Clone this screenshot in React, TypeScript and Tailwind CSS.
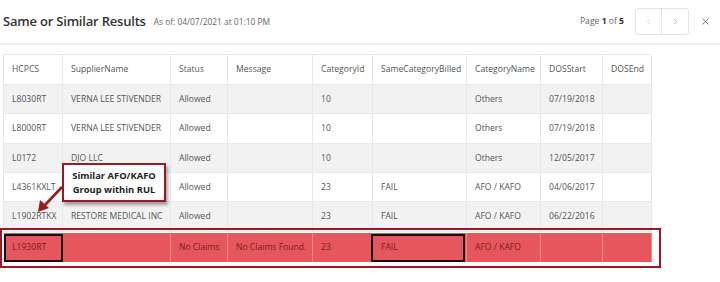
import { ChevronLeft, ChevronRight, X } from "lucide-react";

type Row = {
  hcpcs: string;
  supplier: string;
  status: string;
  message: string;
  categoryId: string;
  sameBilled: string;
  categoryName: string;
  dosStart: string;
  dosEnd: string;
};

const rows: Row[] = [
  { hcpcs: "L8030RT", supplier: "VERNA LEE STIVENDER", status: "Allowed", message: "", categoryId: "10", sameBilled: "", categoryName: "Others", dosStart: "07/19/2018", dosEnd: "" },
  { hcpcs: "L8000RT", supplier: "VERNA LEE STIVENDER", status: "Allowed", message: "", categoryId: "10", sameBilled: "", categoryName: "Others", dosStart: "07/19/2018", dosEnd: "" },
  { hcpcs: "L0172", supplier: "DJO LLC", status: "Allowed", message: "", categoryId: "10", sameBilled: "", categoryName: "Others", dosStart: "12/05/2017", dosEnd: "" },
  { hcpcs: "L4361KXLT", supplier: "", status: "Allowed", message: "", categoryId: "23", sameBilled: "FAIL", categoryName: "AFO / KAFO", dosStart: "04/06/2017", dosEnd: "" },
  { hcpcs: "L1902RTKX", supplier: "RESTORE MEDICAL INC", status: "Allowed", message: "", categoryId: "23", sameBilled: "FAIL", categoryName: "AFO / KAFO", dosStart: "06/22/2016", dosEnd: "" },
];

const heights = ["h-[29px]", "h-[30px]", "h-[29px]", "h-[29px]", "h-[30px]"];

const headers = [
  "HCPCS",
  "SupplierName",
  "Status",
  "Message",
  "CategoryId",
  "SameCategoryBilled",
  "CategoryName",
  "DOSStart",
  "DOSEnd",
];

const gridCols =
  "grid grid-cols-[59px_108px_57px_85px_60px_94px_74px_62px_49px]";

function cells(r: Row) {
  return [
    r.hcpcs,
    r.supplier,
    r.status,
    r.message,
    r.categoryId,
    r.sameBilled,
    r.categoryName,
    r.dosStart,
    r.dosEnd,
  ];
}

export default function App() {
  const redRow = [
    "L1930RT",
    "",
    "No Claims",
    "No Claims Found.",
    "23",
    "FAIL",
    "AFO / KAFO",
    "",
    "",
  ];

  return (
    <div
      className="relative w-[720px] h-[282px] bg-white overflow-hidden text-[#555]"
      style={{ fontFamily: '"Open Sans", "Noto Sans", sans-serif' }}
    >
      {/* Header */}
      <div className="flex items-center h-[45px] pl-[3px] pr-[9px] border-b-2 border-[#efefef]">
        <div className="text-[13px] font-semibold text-[#333] tracking-[-0.2px]">
          Same or Similar Results
        </div>
        <div className="ml-[8px] text-[8.4px] text-[#666] mt-[1px]">
          As of: 04/07/2021 at 01:10 PM
        </div>
        <div className="ml-auto flex items-center">
          <div className="text-[8.6px] text-[#666] mr-[11px]">
            Page <span className="font-bold text-[#333]">1</span> of{" "}
            <span className="font-bold text-[#333]">5</span>
          </div>
          <div className="flex h-[27px] border border-[#e3e3e3] rounded-[3px]">
            <div className="w-[26px] flex items-center justify-center border-r border-[#e3e3e3] text-[#ccc]">
              <ChevronLeft size={9} strokeWidth={1.5} />
            </div>
            <div className="w-[26px] flex items-center justify-center text-[#777]">
              <ChevronRight size={9} strokeWidth={1.5} />
            </div>
          </div>
          <div className="ml-[11px] text-[#555]">
            <X size={11} strokeWidth={1.6} />
          </div>
        </div>
      </div>

      {/* Table */}
      <div className="mt-[9px] ml-[3px] w-[648px] border-t border-l border-[#e6e8eb] text-[8.6px]">
        <div className={`${gridCols} h-[30px] bg-white`}>
          {headers.map((h) => (
            <div
              key={h}
              className="flex items-center px-[8px] border-r border-b border-[#e6e8eb] whitespace-nowrap"
            >
              {h}
            </div>
          ))}
        </div>
        {rows.map((r, i) => (
          <div
            key={r.hcpcs}
            className={`${gridCols} ${heights[i]} ${i % 2 === 0 ? "bg-[#f2f2f2]" : "bg-white"}`}
          >
            {cells(r).map((c, j) => (
              <div
                key={j}
                className="flex items-center px-[8px] border-r border-b border-[#e6e8eb] whitespace-nowrap"
              >
                {c}
              </div>
            ))}
          </div>
        ))}
        <div className={`${gridCols} h-[30px] bg-white`}>
          {redRow.map((c, j) => (
            <div
              key={j}
              className="flex items-center px-[8px] mt-[1px] bg-[#e5575d] border-r border-[#ee8a8e] text-[#7d1b1f] whitespace-nowrap"
            >
              {c}
            </div>
          ))}
        </div>
      </div>

      {/* Red outline around the no-claims row */}
      <div className="absolute left-0 top-[228px] w-[661px] h-[40px] border-2 border-[#9e1820]" />

      {/* Black highlight boxes */}
      <div className="absolute left-[4px] top-[234px] w-[59px] h-[28px] border-2 border-[#111]" />
      <div className="absolute left-[371px] top-[234px] w-[94px] h-[28px] border-2 border-[#111]" />

      {/* Callout */}
      <div className="absolute left-[62px] top-[163px] w-[104px] h-[39px] bg-white border-2 border-[#9e1820] shadow-[2px_3px_3px_rgba(0,0,0,0.35)] flex flex-col items-center justify-center text-[9.4px] font-bold text-[#222] leading-[14px]">
        <div>Similar AFO/KAFO</div>
        <div>Group within RUL</div>
      </div>
      <svg
        className="absolute left-0 top-0"
        width="720"
        height="282"
        viewBox="0 0 720 282"
      >
        <line
          x1="62"
          y1="187"
          x2="45"
          y2="205"
          stroke="#9e1820"
          strokeWidth="2.6"
        />
        <polygon points="38,212 40,200 49,208" fill="#9e1820" />
      </svg>
    </div>
  );
}
